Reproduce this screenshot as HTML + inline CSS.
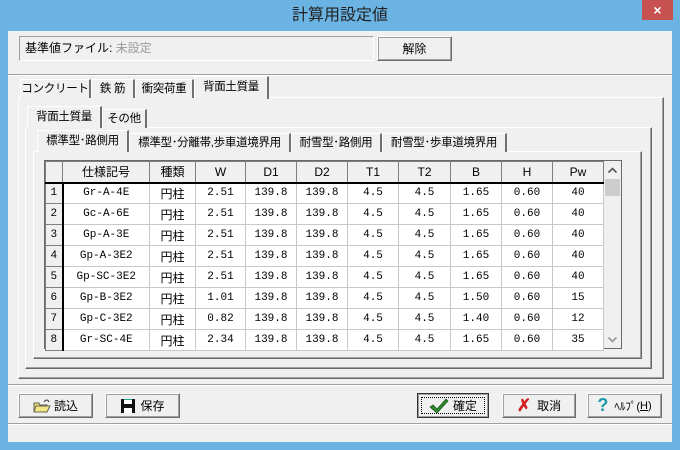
<!DOCTYPE html>
<html><head><meta charset="utf-8"><style>
*{margin:0;padding:0;box-sizing:border-box}
body{width:680px;height:450px;background:#6ab3e2;position:relative;overflow:hidden;font-family:"Liberation Sans","Noto Sans CJK JP",sans-serif;font-size:12px;color:#000}
.a{position:absolute}
.client{left:8px;top:31px;width:664px;height:411px;background:#f0f0f0}
.btn{position:absolute;background:#f0f0f0;border:1px solid;border-color:#fff #6d6d6d #6d6d6d #fff;box-shadow:1px 1px 0 #a0a0a0 inset,-1px -1px 0 #a0a0a0 inset;display:flex;align-items:center;justify-content:center;font-size:12px}
.tab{position:absolute;background:#f0f0f0;border-top:1px solid #fff;border-left:1px solid #fff;border-right:2px solid #707070;font-size:11.5px;letter-spacing:-0.3px;text-align:center;line-height:18px;white-space:nowrap;overflow:hidden}
.panel{position:absolute;border:1px solid;border-color:#fff #696969 #696969 #fff;box-shadow:-1px -1px 0 #a0a0a0 inset}
table{border-collapse:collapse;position:absolute;left:45px;top:161px;background:#fff;table-layout:fixed}
td{border:1px solid #c8c8c8;height:21px;text-align:center;font-family:"Liberation Mono","Noto Sans CJK JP",monospace;font-size:11px;padding:0}
td.c{font-family:"Liberation Sans","Noto Sans CJK JP",sans-serif;font-size:12px}
tr.h td{background:#f0f0f0;border-color:#808080;font-family:"Liberation Sans","Noto Sans CJK JP",sans-serif;font-size:12px;border-bottom:2px solid #000}
td.n{background:#f0f0f0;border-color:#808080;border-right:2px solid #000}
</style></head><body>
<div class="a" style="left:0;top:0;width:680px;height:31px;text-align:center;line-height:32px;font-size:16px;color:#222">計算用設定値</div>
<div class="a" style="left:642px;top:0;width:31px;height:20px;background:#c75050;color:#fff;text-align:center;font-size:14px;line-height:20px;font-weight:bold">×</div>
<div class="a client"></div>
<div class="a" style="left:19px;top:36px;width:355px;height:25px;border:1px solid;border-color:#a0a0a0 #fff #fff #a0a0a0;line-height:22px;padding-left:5px">基準値ファイル: <span style="color:#9a9a9a">未設定</span></div>
<div class="btn" style="left:377px;top:36px;width:75px;height:25px">解除</div>
<div class="a" style="left:8px;top:74px;width:664px;height:2px;border-top:1px solid #a0a0a0;border-bottom:1px solid #fff"></div>

<div class="panel" style="left:18px;top:97px;width:646px;height:282px"></div>
<div class="tab" style="left:20px;top:79px;width:71px;height:19px">コンクリート</div>
<div class="tab" style="left:91px;top:79px;width:44px;height:19px">鉄 筋</div>
<div class="tab" style="left:135px;top:79px;width:59px;height:19px">衝突荷重</div>
<div class="tab" style="left:194px;top:76px;width:75px;height:23px;line-height:20px;border-bottom:none;z-index:2">背面土質量</div>

<div class="panel" style="left:25px;top:127px;width:627px;height:242px"></div>
<div class="tab" style="left:27px;top:106px;width:75px;height:22px;line-height:20px;z-index:2">背面土質量</div>
<div class="tab" style="left:102px;top:109px;width:45px;height:19px">その他</div>

<div class="panel" style="left:33px;top:151px;width:609px;height:208px"></div>
<div class="tab" style="left:37px;top:130px;width:92px;height:22px;line-height:20px;z-index:2">標準型･路側用</div>
<div class="tab" style="left:129px;top:133px;width:162px;height:19px">標準型･分離帯,歩車道境界用</div>
<div class="tab" style="left:291px;top:133px;width:91px;height:19px">耐雪型･路側用</div>
<div class="tab" style="left:382px;top:133px;width:125px;height:19px">耐雪型･歩車道境界用</div>

<div class="a" style="left:44px;top:160px;width:578px;height:189px;border:1px solid #696969;background:#fff"></div>
<table>
<colgroup><col style="width:17px"><col style="width:87px"><col style="width:46px"><col style="width:50px"><col style="width:51px"><col style="width:51px"><col style="width:51px"><col style="width:52px"><col style="width:51px"><col style="width:51px"><col style="width:51px"></colgroup>
<tr class="h"><td></td><td>仕様記号</td><td>種類</td><td>W</td><td>D1</td><td>D2</td><td>T1</td><td>T2</td><td>B</td><td>H</td><td>Pw</td></tr>
<tr><td class="n">1</td><td>Gr-A-4E</td><td class="c">円柱</td><td>2.51</td><td>139.8</td><td>139.8</td><td>4.5</td><td>4.5</td><td>1.65</td><td>0.60</td><td>40</td></tr>
<tr><td class="n">2</td><td>Gc-A-6E</td><td class="c">円柱</td><td>2.51</td><td>139.8</td><td>139.8</td><td>4.5</td><td>4.5</td><td>1.65</td><td>0.60</td><td>40</td></tr>
<tr><td class="n">3</td><td>Gp-A-3E</td><td class="c">円柱</td><td>2.51</td><td>139.8</td><td>139.8</td><td>4.5</td><td>4.5</td><td>1.65</td><td>0.60</td><td>40</td></tr>
<tr><td class="n">4</td><td>Gp-A-3E2</td><td class="c">円柱</td><td>2.51</td><td>139.8</td><td>139.8</td><td>4.5</td><td>4.5</td><td>1.65</td><td>0.60</td><td>40</td></tr>
<tr><td class="n">5</td><td>Gp-SC-3E2</td><td class="c">円柱</td><td>2.51</td><td>139.8</td><td>139.8</td><td>4.5</td><td>4.5</td><td>1.65</td><td>0.60</td><td>40</td></tr>
<tr><td class="n">6</td><td>Gp-B-3E2</td><td class="c">円柱</td><td>1.01</td><td>139.8</td><td>139.8</td><td>4.5</td><td>4.5</td><td>1.50</td><td>0.60</td><td>15</td></tr>
<tr><td class="n">7</td><td>Gp-C-3E2</td><td class="c">円柱</td><td>0.82</td><td>139.8</td><td>139.8</td><td>4.5</td><td>4.5</td><td>1.40</td><td>0.60</td><td>12</td></tr>
<tr><td class="n">8</td><td>Gr-SC-4E</td><td class="c">円柱</td><td>2.34</td><td>139.8</td><td>139.8</td><td>4.5</td><td>4.5</td><td>1.65</td><td>0.60</td><td>35</td></tr>
</table>
<div class="a" style="left:604px;top:161px;width:17px;height:187px;background:#f0f0f0"></div>
<svg class="a" style="left:607px;top:167px" width="11" height="7" viewBox="0 0 11 7"><path d="M1.5 5.5L5.5 1.5L9.5 5.5" fill="none" stroke="#555" stroke-width="1.6"/></svg>
<div class="a" style="left:605px;top:179px;width:15px;height:17px;background:#cdcdcd"></div>
<svg class="a" style="left:607px;top:336px" width="11" height="7" viewBox="0 0 11 7"><path d="M1.5 1.5L5.5 5.5L9.5 1.5" fill="none" stroke="#999" stroke-width="1.6"/></svg>

<div class="a" style="left:8px;top:384px;width:664px;height:2px;border-top:1px solid #a0a0a0;border-bottom:1px solid #fff"></div>
<div class="btn" style="left:18px;top:393px;width:75px;height:25px">
<svg width="18" height="16" viewBox="0 0 18 16" style="margin-right:3px"><path d="M1 5h5l1 2h7v7H1z" fill="#e8d870" stroke="#665" /><path d="M3 8h14l-3 6H1z" fill="#f4e680" stroke="#665"/><path d="M11 4q3-4 5 0" fill="none" stroke="#333"/></svg>読込</div>
<div class="btn" style="left:105px;top:393px;width:75px;height:25px">
<svg width="16" height="16" viewBox="0 0 16 16" style="margin-right:4px"><rect x="1" y="1" width="14" height="14" fill="#111"/><rect x="4" y="1" width="8" height="5" fill="#fff"/><rect x="4" y="1" width="8" height="1" fill="#2a9"/><rect x="4" y="10" width="8" height="5" fill="#fff"/></svg>保存</div>
<div class="btn" style="left:417px;top:393px;width:72px;height:25px;border:1px solid #333"><div style="position:absolute;left:3px;top:3px;right:3px;bottom:3px;border:1px dotted #000"></div>
<svg width="20" height="16" viewBox="0 0 20 16" style="margin-right:4px"><path d="M1 9l3-2 4 4L17 1l2 2L8 15z" fill="#2d8a2d" stroke="#155015" stroke-width=".7"/></svg>確定</div>
<div class="btn" style="left:502px;top:393px;width:74px;height:25px"><span style="color:#d42020;font-weight:bold;font-size:17px;margin-right:6px">✗</span>取消</div>
<div class="btn" style="left:587px;top:393px;width:75px;height:25px;font-size:11px"><span style="color:#1a9aa8;font-weight:bold;font-size:18px;margin-right:6px">?</span>ﾍﾙﾌﾟ(<u>H</u>)</div>
<div class="a" style="left:8px;top:423px;width:664px;height:2px;border-top:1px solid #a0a0a0;border-bottom:1px solid #fff"></div>
</body></html>
